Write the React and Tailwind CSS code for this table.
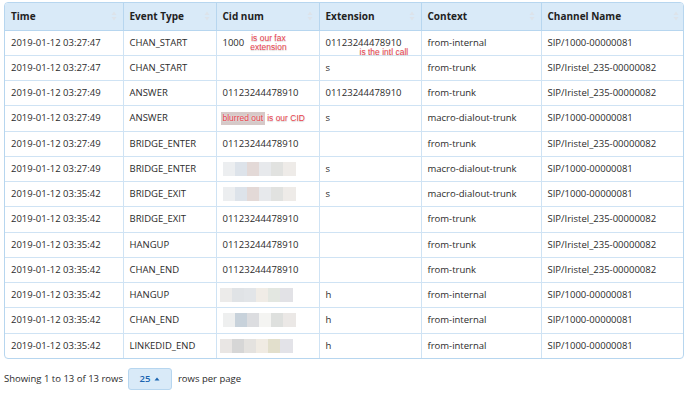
import React from "react";

const columns = [
  { label: "Time", w: "w-[118px]" },
  { label: "Event Type", w: "w-[93px]" },
  { label: "Cid num", w: "w-[103px]" },
  { label: "Extension", w: "w-[102px]" },
  { label: "Context", w: "w-[120px]" },
  { label: "Channel Name", w: "w-[144px]" },
];

const NUM = "01123244478910";
const SIP1 = "SIP/1000-00000081";
const SIP2 = "SIP/Iristel_235-00000082";

const blurA = ["#eceef0", "#dde3ea", "#e3d9d7", "#e7e9ec", "#e1e2e0", "#eeebe8"];
const blurB = ["#ecebea", "#e0e3e6", "#e2e5e8", "#f0ece6", "#e3e7e1", "#e2e2e6"];
const blurC = ["#eeefef", "#c8d2db", "#dcdde0", "#f4f4f2", "#dee0de", "#ebe8e6"];
const blurD = ["#e9e6e4", "#d6d6d6", "#e4e2df", "#f0ebe3", "#e2dfcc", "#e3e3e8"];

const rows = [
  ["2019-01-12 03:27:47", "CHAN_START", "fax", "intl", "from-internal", SIP1],
  ["2019-01-12 03:27:47", "CHAN_START", "", "s", "from-trunk", SIP2],
  ["2019-01-12 03:27:49", "ANSWER", NUM, NUM, "from-trunk", SIP2],
  ["2019-01-12 03:27:49", "ANSWER", "cid", "s", "macro-dialout-trunk", SIP1],
  ["2019-01-12 03:27:49", "BRIDGE_ENTER", NUM, "", "from-trunk", SIP2],
  ["2019-01-12 03:27:49", "BRIDGE_ENTER", { blur: blurA }, "s", "macro-dialout-trunk", SIP1],
  ["2019-01-12 03:35:42", "BRIDGE_EXIT", { blur: blurA }, "s", "macro-dialout-trunk", SIP1],
  ["2019-01-12 03:35:42", "BRIDGE_EXIT", NUM, "", "from-trunk", SIP2],
  ["2019-01-12 03:35:42", "HANGUP", NUM, "", "from-trunk", SIP2],
  ["2019-01-12 03:35:42", "CHAN_END", NUM, "", "from-trunk", SIP2],
  ["2019-01-12 03:35:42", "HANGUP", { blur: blurB, shift: true }, "h", "from-internal", SIP1],
  ["2019-01-12 03:35:42", "CHAN_END", { blur: blurC }, "h", "from-internal", SIP1],
  ["2019-01-12 03:35:42", "LINKEDID_END", { blur: blurD, shift: true }, "h", "from-internal", SIP1],
];

const note =
  "font-['Liberation_Sans',Arial,sans-serif] text-[8.5px] leading-[9px] text-[#e8404a] [text-shadow:0_0_2px_#fff,0_1px_1px_#ccc]";

const SortIcon = () => (
  <svg width="6" height="10" viewBox="0 0 6 10" className="shrink-0">
    <path d="M3 0.5 L5.5 4 H0.5 Z" fill="#dde3ea" />
    <path d="M3 9.5 L5.5 6 H0.5 Z" fill="#dde3ea" />
  </svg>
);

const Blur = ({ colors, shift }) => (
  <div className={`flex h-[14px] w-[73px] blur-[0.6px] ${shift ? "-ml-[3px]" : ""}`}>
    {colors.map((c, i) => (
      <div key={i} className="flex-1 h-full" style={{ background: c }} />
    ))}
  </div>
);

const CidCell = ({ value }) => {
  if (value === "fax") {
    return (
      <div className="flex items-center">
        <span>1000</span>
        <div className={`${note} ml-[6px] text-center`}>
          is our fax
          <br />
          extension
        </div>
      </div>
    );
  }
  if (value === "cid") {
    return (
      <div className={`flex items-center -ml-[2px] ${note}`}>
        <span className="bg-[#d6c9c8] px-[2px] py-[2px]">blurred out</span>
        <span className="ml-[2px]">is our CID</span>
      </div>
    );
  }
  if (value && value.blur) return <Blur colors={value.blur} shift={value.shift} />;
  return value;
};

const ExtCell = ({ value }) => {
  if (value === "intl") {
    return (
      <div className="relative leading-[10px]">
        <span>{NUM}</span>
        <div className={`${note} absolute left-[34px] top-[10px] whitespace-nowrap`}>
          is the intl call
        </div>
      </div>
    );
  }
  return value;
};

export default function App() {
  return (
    <div className="bg-white w-[690px] h-[399px] pt-[2px] px-[4px] font-['Open_Sans',sans-serif] text-[9.5px] text-[#2b2b2b]">
      <div className="w-[680px] border border-[#b7d6ef] rounded-[4px] overflow-hidden">
        <table className="w-full table-fixed border-collapse">
          <thead>
            <tr className="bg-[#d9eaf8] h-[27px]">
              {columns.map((c, i) => (
                <th
                  key={c.label}
                  className={`${c.w} text-left font-bold text-[#222] text-[10px] px-[6px] border-b border-[#b7d6ef] ${
                    i > 0 ? "border-l" : ""
                  }`}
                >
                  <div className="flex items-center justify-between">
                    <span>{c.label}</span>
                    <SortIcon />
                  </div>
                </th>
              ))}
            </tr>
          </thead>
          <tbody>
            {rows.map((r, ri) => (
              <tr key={ri} className="h-[25.25px]">
                {r.map((cell, ci) => (
                  <td
                    key={ci}
                    className={`px-[6px] py-0 whitespace-nowrap ${
                      ri < rows.length - 1 ? "border-b" : ""
                    } ${ci > 0 ? "border-l" : ""} border-[#cfe3f4]`}
                  >
                    {ci === 2 ? <CidCell value={cell} /> : ci === 3 ? <ExtCell value={cell} /> : cell}
                  </td>
                ))}
              </tr>
            ))}
          </tbody>
        </table>
      </div>
      <div className="flex items-center mt-[9px] text-[9.5px]">
        <span>Showing 1 to 13 of 13 rows</span>
        <button className="ml-[5px] w-[44px] h-[22px] bg-[#d9eaf8] border border-[#b7d6ef] rounded-[3px] flex items-center justify-center text-[#1a64b0] font-semibold">
          25
          <svg width="6" height="4" viewBox="0 0 6 4" className="ml-[4px]">
            <path d="M3 0.5 L5.5 3.5 H0.5 Z" fill="#1a64b0" />
          </svg>
        </button>
        <span className="ml-[6px]">rows per page</span>
      </div>
    </div>
  );
}
